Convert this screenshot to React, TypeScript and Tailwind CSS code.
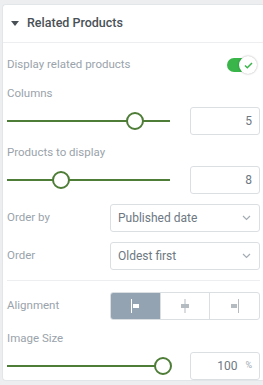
import React from "react";

const font = { fontFamily: "'Roboto', 'Noto Sans', sans-serif" };

function Slider({ pos }: { pos: number }) {
  return (
    <div className="relative h-[18px] w-[163px]">
      <div className="absolute left-0 right-0 top-[8px] h-[2px] bg-[#4e7d37]" />
      <div
        className="absolute top-0 h-[18px] w-[18px] rounded-full border-2 border-[#4e7d37] bg-white"
        style={{ left: pos - 9 }}
      />
    </div>
  );
}

function NumBox({ value, unit }: { value: string; unit?: string }) {
  return (
    <div className="flex h-[28px] w-[70px] items-center justify-end rounded-[3px] border border-[#dcdfe2] pr-[7px] text-[12px] text-[#6d7882]">
      <span>{value}</span>
      {unit && <span className="ml-[8px] text-[9px] text-[#a4acb3]">{unit}</span>}
    </div>
  );
}

function Select({ value }: { value: string }) {
  return (
    <div className="flex h-[28px] w-[150px] items-center justify-between rounded-[3px] border border-[#dcdfe2] pl-[7px] pr-[8px] text-[12px] text-[#6d7882]">
      <span>{value}</span>
      <svg width="9" height="6" viewBox="0 0 9 6">
        <path d="M1 1l3.5 3.5L8 1" fill="none" stroke="#a4acb3" strokeWidth="1.2" />
      </svg>
    </div>
  );
}

export default function App() {
  return (
    <div className="h-[385px] w-[263px] overflow-hidden bg-[#eceef0] pl-[2px] pt-[4px]" style={font}>
      <div className="h-[377px] rounded-tl-[4px] rounded-bl-[4px] border-b border-l border-t border-[#e3e6e9] bg-white">
        <div className="flex h-[38px] items-center border-b border-[#eceef0] pl-[8px]">
          <svg width="8" height="5" viewBox="0 0 8 5" className="mr-[8px]">
            <path d="M0 0h8L4 5z" fill="#495157" />
          </svg>
          <span className="text-[12.5px] font-medium text-[#495157]">Related Products</span>
        </div>
        <div className="pl-[4px] pr-[3px] text-[11.5px] text-[#9aa3ab]">
          <div className="mt-[13px] flex h-[18px] items-center justify-between">
            <span>Display related products</span>
            <div className="relative mr-[3px] h-[18px] w-[30px]">
              <div className="absolute left-0 top-[2px] h-[14px] w-[26px] rounded-full bg-[#39b54a]" />
              <div className="absolute right-0 top-0 flex h-[18px] w-[18px] items-center justify-center rounded-full bg-white shadow-[0_0_2px_rgba(0,0,0,0.35)]">
                <svg width="9" height="7" viewBox="0 0 9 7">
                  <path d="M1 3.5l2.3 2.3L8 1" fill="none" stroke="#39b54a" strokeWidth="1.5" />
                </svg>
              </div>
            </div>
          </div>
          <div className="mt-[11px] h-[16px] leading-[16px]">Columns</div>
          <div className="mt-[6px] flex h-[28px] items-center justify-between">
            <Slider pos={128} />
            <NumBox value="5" />
          </div>
          <div className="mt-[9px] h-[16px] leading-[16px]">Products to display</div>
          <div className="mt-[6px] flex h-[28px] items-center justify-between">
            <Slider pos={54} />
            <NumBox value="8" />
          </div>
          <div className="mt-[10px] flex h-[28px] items-center justify-between">
            <span>Order by</span>
            <Select value="Published date" />
          </div>
          <div className="mt-[10px] flex h-[28px] items-center justify-between">
            <span>Order</span>
            <Select value="Oldest first" />
          </div>
          <div className="mt-[10px] border-t border-[#eceef0]" />
          <div className="mt-[11px] flex h-[28px] items-center justify-between">
            <span>Alignment</span>
            <div className="flex h-[28px] w-[150px] overflow-hidden rounded-[3px] border border-[#dcdfe2]">
              <div className="flex flex-1 items-center justify-center bg-[#93a3b1]">
                <svg width="12" height="14" viewBox="0 0 12 14">
                  <rect x="2" y="0" width="1" height="14" fill="#fff" />
                  <rect x="4" y="5" width="6" height="4" fill="#fff" />
                </svg>
              </div>
              <div className="flex flex-1 items-center justify-center border-l border-[#dcdfe2]">
                <svg width="12" height="14" viewBox="0 0 12 14">
                  <rect x="5.5" y="0" width="1" height="14" fill="#b4bbc1" />
                  <rect x="2" y="5" width="8" height="4" fill="#b4bbc1" />
                </svg>
              </div>
              <div className="flex flex-1 items-center justify-center border-l border-[#dcdfe2]">
                <svg width="12" height="14" viewBox="0 0 12 14">
                  <rect x="9" y="0" width="1" height="14" fill="#b4bbc1" />
                  <rect x="2" y="5" width="6" height="4" fill="#b4bbc1" />
                </svg>
              </div>
            </div>
          </div>
          <div className="mt-[10px] h-[16px] leading-[16px]">Image Size</div>
          <div className="mt-[6px] flex h-[28px] items-center justify-between">
            <Slider pos={156} />
            <NumBox value="100" unit="%" />
          </div>
        </div>
      </div>
    </div>
  );
}
